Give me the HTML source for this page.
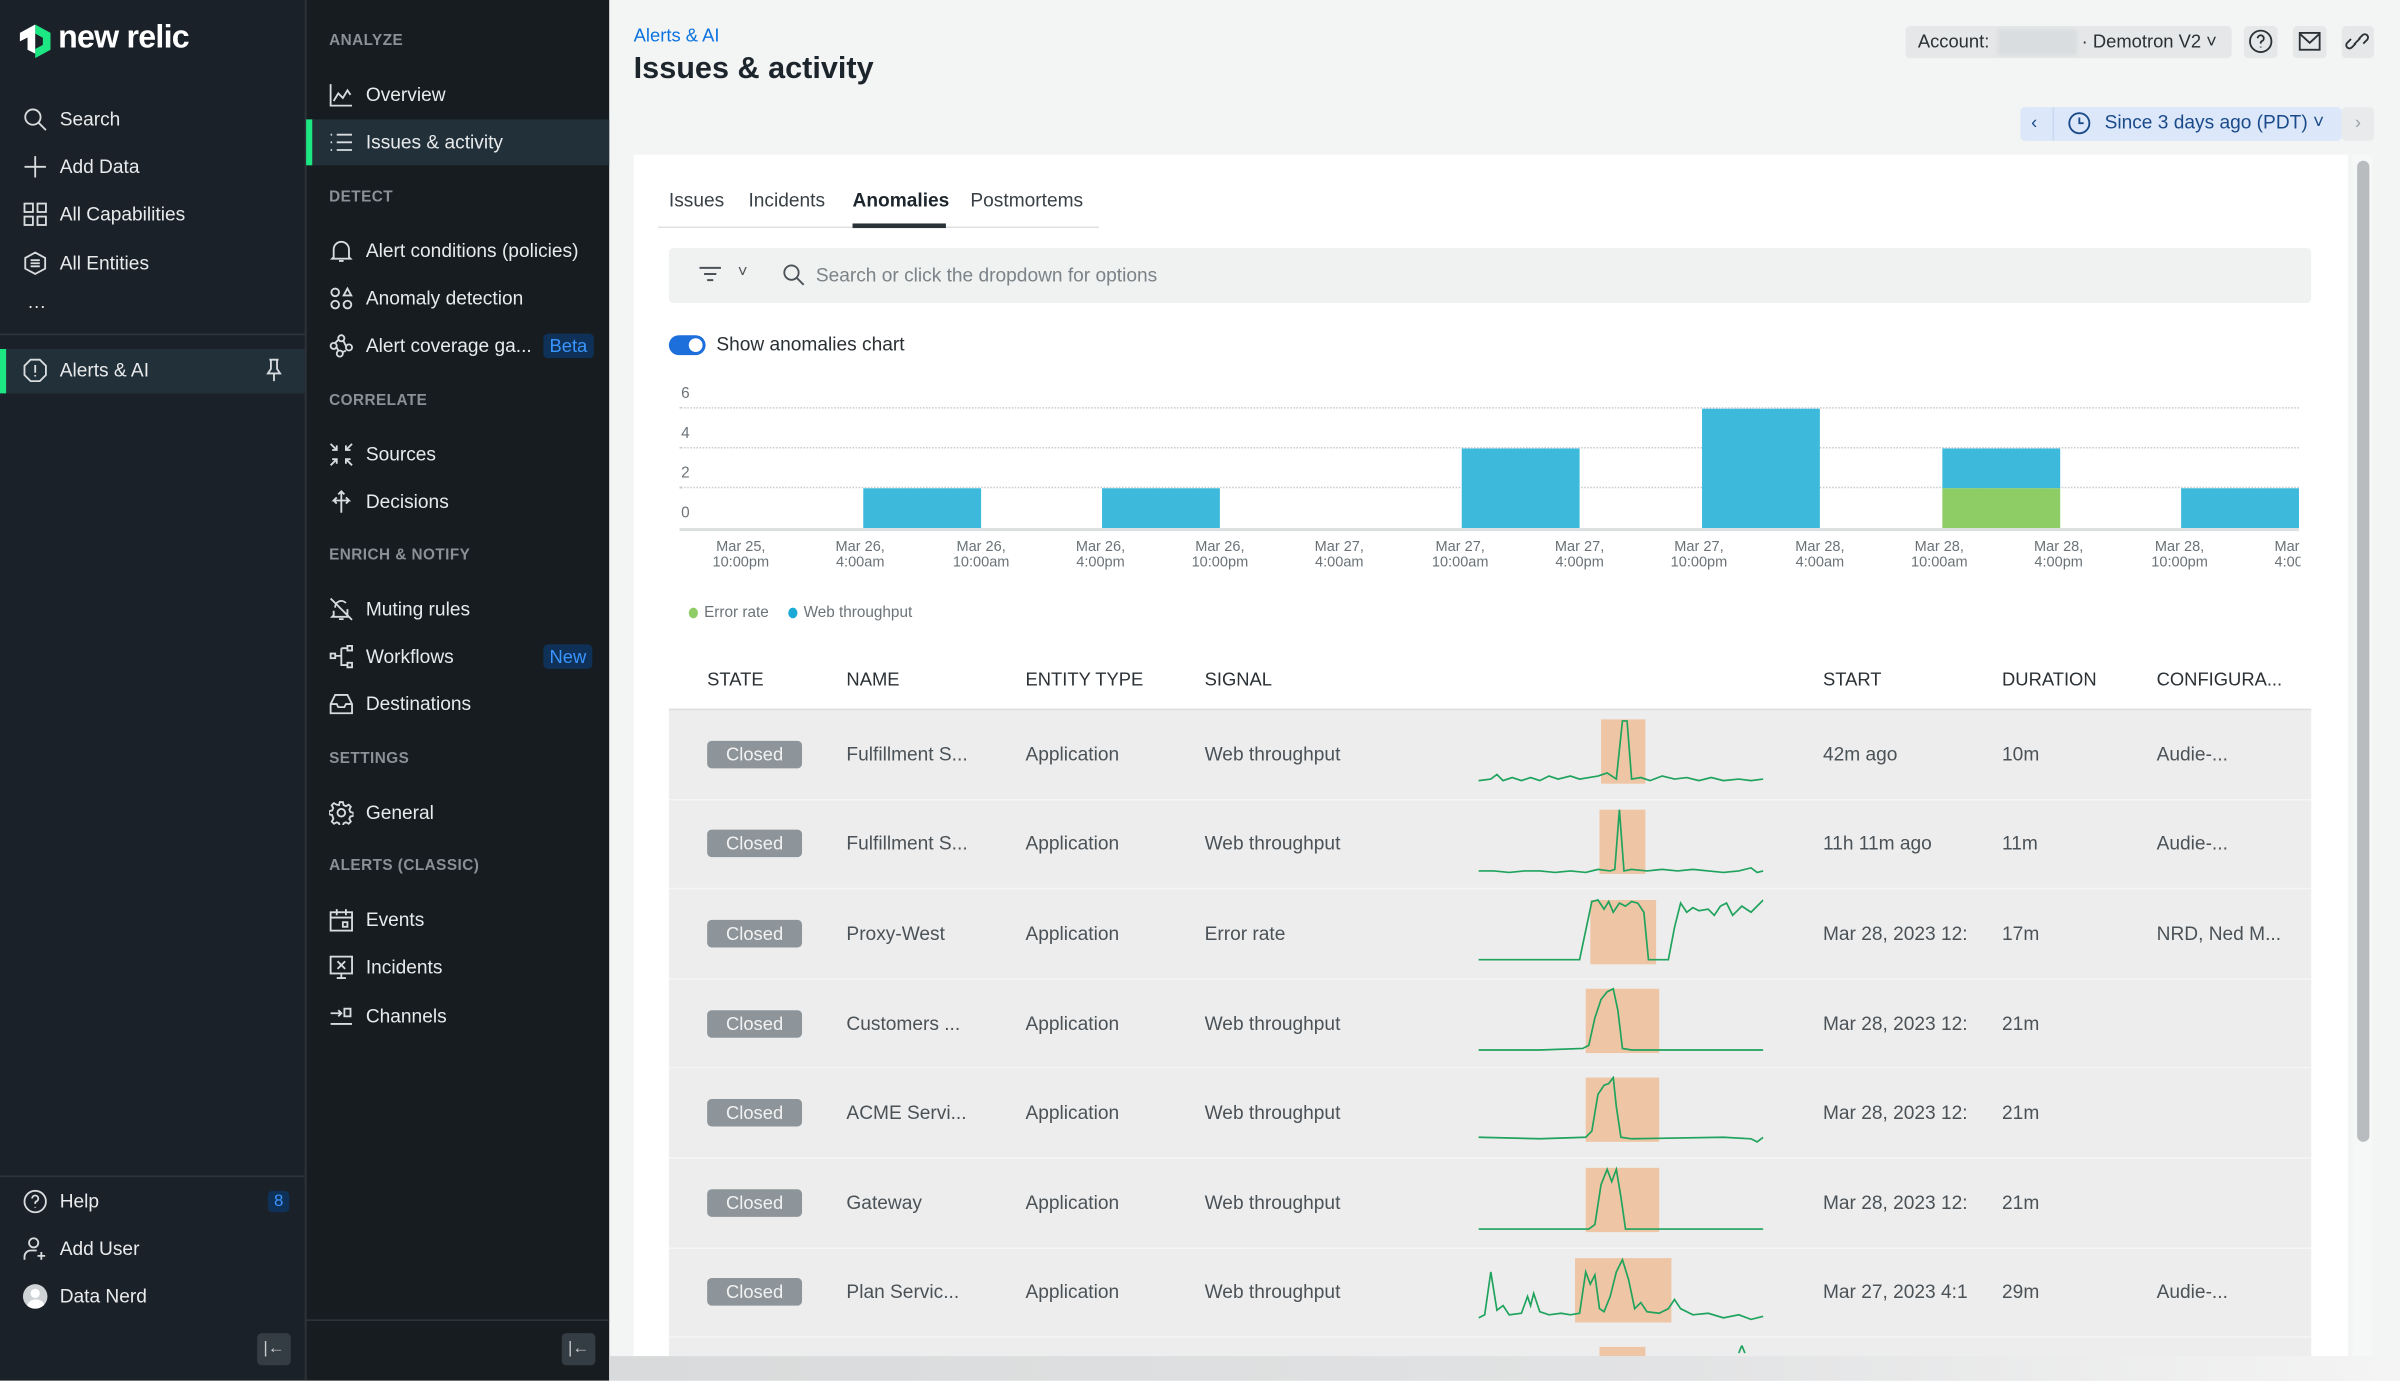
<!DOCTYPE html>
<html><head><meta charset="utf-8">
<style>
*{box-sizing:border-box;margin:0;padding:0}
html,body{width:2400px;height:1380px;overflow:hidden;background:#f3f4f4}
#w{position:absolute;left:0;top:0;width:1568px;height:902px;transform:scale(1.53061);transform-origin:0 0;font-family:"Liberation Sans",sans-serif;background:#f3f4f4}
.a{position:absolute;white-space:nowrap}
#s1{position:absolute;left:0;top:0;width:200px;height:902px;background:#1b2128;border-right:1px solid #2a3138}
#s2{position:absolute;left:200px;top:0;width:198px;height:902px;background:#161c1f}
.ni{position:absolute;font-size:12.5px;color:#e8eaeb;transform:translateY(-50%)}
.ic{position:absolute;transform:translateY(-50%)}
.hd{position:absolute;font-size:10px;color:#8a9196;letter-spacing:.3px;transform:translateY(-50%);font-weight:bold}
.bd{position:absolute;font-size:12px;color:#3a95ff;background:#0f3157;border-radius:3px;padding:1px 4px;transform:translateY(-50%)}
svg.i{width:16px;height:16px;fill:none;stroke:#d8dcde;stroke-width:1.2}
.th{position:absolute;top:444px;font-size:12px;color:#2a3034;transform:translateY(-50%)}
.row{position:absolute;left:437px;width:1073px;height:58.6px;background:#ededed;border-bottom:1.5px solid #f5f5f5}
.row .c{position:absolute;top:50%;transform:translateY(-50%);font-size:12.5px;color:#4b5257;white-space:nowrap}
.cl{position:absolute;left:25px;top:50%;transform:translateY(-50%);width:62px;height:18px;background:#8e959a;border-radius:3px;color:#f2f2f2;font-size:12px;text-align:center;line-height:18px}
.sp{position:absolute;left:529px;top:5px;width:186px;height:45px}
.tk{position:absolute;top:353px;font-size:9.5px;color:#6b7378;text-align:center;line-height:10px;transform:translateX(-50%)}
</style></head><body><div id="w">

<div id="s1">
  <svg class="a" style="left:12px;top:15px" width="22" height="24" viewBox="0 0 22 24"><path d="M11 1 L21 6.5 L21 17.5 L11 23 L11 17 L16 14.3 L16 9.7 L11 7 Z" fill="#1ce783"/><path d="M11 1 L1 6.5 L1 12 L6 9.5 L6 17.5 L11 20 L11 7 Z" fill="#fff"/></svg>
  <div class="a" style="left:38px;top:13px;font-size:21px;font-weight:bold;color:#fff;letter-spacing:-.5px">new relic</div>

  <svg class="i ic" style="left:15px;top:78px" viewBox="0 0 16 16"><circle cx="6.5" cy="6.5" r="5"/><path d="M10 10l5 5"/></svg><div class="ni" style="left:39px;top:78px">Search</div>
  <svg class="i ic" style="left:15px;top:109px" viewBox="0 0 16 16"><path d="M8 1v14M1 8h14"/></svg><div class="ni" style="left:39px;top:109px">Add Data</div>
  <svg class="i ic" style="left:15px;top:140px" viewBox="0 0 16 16"><rect x="1" y="1" width="5.5" height="5.5"/><rect x="9.5" y="1" width="5.5" height="5.5"/><rect x="1" y="9.5" width="5.5" height="5.5"/><rect x="9.5" y="9.5" width="5.5" height="5.5"/></svg><div class="ni" style="left:39px;top:140px">All Capabilities</div>
  <svg class="i ic" style="left:15px;top:172px" viewBox="0 0 16 16"><path d="M8 1l6.5 3.5v7L8 15 1.5 11.5v-7z"/><path d="M5 6h6M5 8h6M5 10h6"/></svg><div class="ni" style="left:39px;top:172px">All Entities</div>
  <div class="ni" style="left:18px;top:200px;font-size:12px">···</div>
  <div class="a" style="left:0;top:218px;width:199px;height:1px;background:#2e363d"></div>
  <div class="a" style="left:0;top:228px;width:199px;height:29px;background:#22303a"></div>
  <div class="a" style="left:0;top:228px;width:4px;height:29px;background:#1ce783"></div>
  <svg class="i ic" style="left:15px;top:242px" viewBox="0 0 16 16"><path d="M5 1h6l4 4v6l-4 4H5l-4-4V5z"/><path d="M8 4.5v5M8 11v1"/></svg><div class="ni" style="left:39px;top:242px">Alerts &amp; AI</div>
  <svg class="i ic" style="left:171px;top:242px" viewBox="0 0 16 16"><path d="M5 1h6M6 1v6l-2 3h8l-2-3V1M8 10v5"/></svg>

  <div class="a" style="left:0;top:768px;width:199px;height:1px;background:#2e363d"></div>
  <svg class="i ic" style="left:15px;top:785px" viewBox="0 0 16 16"><circle cx="8" cy="8" r="7"/><path d="M6 6a2 2 0 1 1 2.5 2c-.5.3-.5.7-.5 1.5M8 11.5v.5"/></svg><div class="ni" style="left:39px;top:785px">Help</div>
  <div class="bd" style="left:175px;top:785px;font-size:11px;padding:1px 4px">8</div>
  <svg class="i ic" style="left:15px;top:816px" viewBox="0 0 16 16"><circle cx="7" cy="4" r="3"/><path d="M1 15v-2a4 4 0 0 1 4-4h4M12 10v5M9.5 12.5h5"/></svg><div class="ni" style="left:39px;top:816px">Add User</div>
  <div class="a" style="left:15px;top:839px;width:16px;height:16px;border-radius:50%;background:#cfd3d6;overflow:hidden"><div style="position:absolute;left:5px;top:3px;width:6px;height:6px;border-radius:50%;background:#fff"></div><div style="position:absolute;left:2.5px;top:10px;width:11px;height:8px;border-radius:50%;background:#fff"></div></div><div class="ni" style="left:39px;top:847px">Data Nerd</div>
  <div class="a" style="left:168px;top:871px;width:22px;height:21px;background:#353d44;border-radius:3px;color:#c8ccce;font-size:11px;text-align:center;line-height:21px">|←</div>
</div>

<div id="s2">
  <div class="hd" style="left:15px;top:27px">ANALYZE</div>
  <svg class="i ic" style="left:15px;top:62px" viewBox="0 0 16 16"><path d="M1 1v14h14M3 12l3-5 3 3 3-5 2 3"/></svg><div class="ni" style="left:39px;top:62px">Overview</div>
  <div class="a" style="left:0;top:78px;width:198px;height:30px;background:#22303a"></div>
  <div class="a" style="left:0;top:78px;width:4px;height:30px;background:#1ce783"></div>
  <svg class="i ic" style="left:15px;top:93px" viewBox="0 0 16 16"><path d="M1 3h1M5 3h10M1 8h1M5 8h10M1 13h1M5 13h10"/></svg><div class="ni" style="left:39px;top:93px">Issues &amp; activity</div>
  <div class="hd" style="left:15px;top:129px">DETECT</div>
  <svg class="i ic" style="left:15px;top:164px" viewBox="0 0 16 16"><path d="M3 12V7a5 5 0 0 1 10 0v5l1 1H2zM6.5 14.5h3"/></svg><div class="ni" style="left:39px;top:164px">Alert conditions (policies)</div>
  <svg class="i ic" style="left:15px;top:195px" viewBox="0 0 16 16"><circle cx="4" cy="4" r="2.5"/><path d="M12 1.5l2.5 4.5h-5z"/><circle cx="4" cy="12" r="2.5"/><circle cx="12" cy="12" r="2.5"/></svg><div class="ni" style="left:39px;top:195px">Anomaly detection</div>
  <svg class="i ic" style="left:15px;top:226px" viewBox="0 0 16 16"><circle cx="8" cy="3" r="2"/><circle cx="3" cy="8" r="2"/><circle cx="13" cy="9" r="2"/><circle cx="7" cy="13" r="2"/><path d="M6 4l-2 2M11 8l-2-4M5 9l1 2M11 11l-2 1"/></svg><div class="ni" style="left:39px;top:226px">Alert coverage ga...</div>
  <div class="bd" style="left:355px;top:226px;left:155px">Beta</div>
  <div class="hd" style="left:15px;top:262px">CORRELATE</div>
  <svg class="i ic" style="left:15px;top:297px" viewBox="0 0 16 16"><path d="M1 1l4 4M5 2v3H2M15 1l-4 4M11 2v3h3M1 15l4-4M2 11h3v3M15 15l-4-4M14 11h-3v3"/></svg><div class="ni" style="left:39px;top:297px">Sources</div>
  <svg class="i ic" style="left:15px;top:328px" viewBox="0 0 16 16"><path d="M8 1v14M6 3l2-2 2 2M8 7H3l2-2M3 7l2 2M8 7h5l-2-2M13 7l-2 2"/></svg><div class="ni" style="left:39px;top:328px">Decisions</div>
  <div class="hd" style="left:15px;top:363px">ENRICH &amp; NOTIFY</div>
  <svg class="i ic" style="left:15px;top:398px" viewBox="0 0 16 16"><path d="M1 1l14 14M4 7a4 4 0 0 1 7-3M12 8v4l1 1H2l1-1V9M6.5 14.5h3"/></svg><div class="ni" style="left:39px;top:398px">Muting rules</div>
  <svg class="i ic" style="left:15px;top:429px" viewBox="0 0 16 16"><rect x="1" y="6" width="3" height="3"/><rect x="12" y="1" width="3" height="3"/><rect x="12" y="12" width="3" height="3"/><path d="M4 7.5h4M8 2.5v11h4M8 2.5h4"/></svg><div class="ni" style="left:39px;top:429px">Workflows</div>
  <div class="bd" style="left:155px;top:429px">New</div>
  <svg class="i ic" style="left:15px;top:460px" viewBox="0 0 16 16"><path d="M1 8l3-6h8l3 6v6H1zM1 8h4l1 2h4l1-2h4"/></svg><div class="ni" style="left:39px;top:460px">Destinations</div>
  <div class="hd" style="left:15px;top:496px">SETTINGS</div>
  <svg class="i ic" style="left:15px;top:531px" viewBox="0 0 16 16"><circle cx="8" cy="8" r="2.5"/><path d="M7 1h2l.5 2 1.5.7 1.8-1 1.4 1.4-1 1.8.7 1.6 2 .5v2l-2 .5-.7 1.5 1 1.8-1.4 1.4-1.8-1-1.5.7-.5 2H7l-.5-2-1.5-.7-1.8 1-1.4-1.4 1-1.8L2 9.5 0 9V7l2-.5.7-1.6-1-1.8 1.4-1.4 1.8 1L6.5 3z"/></svg><div class="ni" style="left:39px;top:531px">General</div>
  <div class="hd" style="left:15px;top:566px">ALERTS (CLASSIC)</div>
  <svg class="i ic" style="left:15px;top:601px" viewBox="0 0 16 16"><rect x="1" y="3" width="14" height="12"/><path d="M1 6.5h14M5 1v4M11 1v4"/><rect x="9" y="9.5" width="3" height="3"/></svg><div class="ni" style="left:39px;top:601px">Events</div>
  <svg class="i ic" style="left:15px;top:632px" viewBox="0 0 16 16"><rect x="1" y="1" width="14" height="11"/><path d="M5.5 4l5 5M10.5 4l-5 5M8 12v3M5 15h6"/></svg><div class="ni" style="left:39px;top:632px">Incidents</div>
  <svg class="i ic" style="left:15px;top:664px" viewBox="0 0 16 16"><path d="M1 6h7M6 4l2 2-2 2M1 13h14"/><rect x="10" y="3" width="4" height="5"/></svg><div class="ni" style="left:39px;top:664px">Channels</div>
  <div class="a" style="left:0;top:862px;width:198px;height:1px;background:#2e363d"></div>
  <div class="a" style="left:167px;top:871px;width:22px;height:21px;background:#353d44;border-radius:3px;color:#c8ccce;font-size:11px;text-align:center;line-height:21px">|←</div>
</div>

<!-- main header -->
<div class="a" style="left:414px;top:16px;font-size:12px;color:#0c74df">Alerts &amp; AI</div>
<div class="a" style="left:414px;top:34px;font-size:20px;font-weight:bold;color:#1d252c">Issues &amp; activity</div>
<div class="a" style="left:1245px;top:17px;width:213px;height:21px;background:#e5e7e8;border-radius:3px"></div>
<div class="a" style="left:1253px;top:20px;font-size:12px;color:#2a3034">Account:</div>
<div class="a" style="left:1305px;top:19px;width:52px;height:17px;background:#dadddf;border-radius:2px;filter:blur(1px)"></div>
<div class="a" style="left:1360px;top:20px;font-size:12px;color:#2a3034">· Demotron V2 ˅</div>
<div class="a" style="left:1466px;top:17px;width:22px;height:21px;background:#e5e7e8;border-radius:3px"></div>
<svg class="a" style="left:1469px;top:19px" width="16" height="16" viewBox="0 0 16 16" fill="none" stroke="#2a3034" stroke-width="1.2"><circle cx="8" cy="8" r="7"/><path d="M6 6a2 2 0 1 1 2.5 2c-.5.3-.5.7-.5 1.5M8 11.5v.5"/></svg>
<div class="a" style="left:1498px;top:17px;width:22px;height:21px;background:#e5e7e8;border-radius:3px"></div>
<svg class="a" style="left:1501px;top:19px" width="16" height="16" viewBox="0 0 16 16" fill="none" stroke="#2a3034" stroke-width="1.2"><rect x="1.5" y="2.5" width="13" height="11"/><path d="M1.5 3l6.5 6 6.5-6"/></svg>
<div class="a" style="left:1530px;top:17px;width:21px;height:21px;background:#e5e7e8;border-radius:3px"></div>
<svg class="a" style="left:1532px;top:19px" width="16" height="16" viewBox="0 0 16 16" fill="none" stroke="#2a3034" stroke-width="1.2"><path d="M7 9.5l-2.5 2.5a2 2 0 0 1-3-3L4 6.5M9 6.5L11.5 4a2 2 0 0 1 3 3L12 9.5M6 10l4-4"/></svg>

<div class="a" style="left:1320px;top:70px;width:210px;height:22px;background:#dce8fa;border-radius:3px"></div>
<div class="a" style="left:1341px;top:70px;width:1px;height:22px;background:#c8d8f0"></div>
<div class="a" style="left:1327px;top:73px;font-size:12px;color:#1a4a8a">‹</div>
<svg class="a" style="left:1351px;top:73px" width="15" height="15" viewBox="0 0 16 16" fill="none" stroke="#1a4a8a" stroke-width="1.3"><circle cx="8" cy="8" r="7"/><path d="M8 4v4h3"/></svg>
<div class="a" style="left:1375px;top:73px;font-size:12.5px;color:#1a4a8a">Since 3 days ago (PDT) ˅</div>
<div class="a" style="left:1530px;top:70px;width:21px;height:22px;background:#e8eaeb;border-radius:3px;color:#9aa0a4;font-size:12px;text-align:center;line-height:21px">›</div>

<!-- card -->
<div class="a" style="left:414px;top:101px;width:1120px;height:785px;background:#fff;overflow:hidden">
  <div style="position:absolute;left:0;top:0;width:1120px;height:785px;transform:translate(-414px,-101px)">
    <div class="a" style="left:437px;top:124px;font-size:12.5px;color:#3a4146">Issues</div>
    <div class="a" style="left:489px;top:124px;font-size:12.5px;color:#3a4146">Incidents</div>
    <div class="a" style="left:557px;top:124px;font-size:12.5px;color:#1d252c;font-weight:bold">Anomalies</div>
    <div class="a" style="left:634px;top:124px;font-size:12.5px;color:#3a4146">Postmortems</div>
    <div class="a" style="left:430px;top:148px;width:288px;height:1px;background:#dfe1e2"></div>
    <div class="a" style="left:557px;top:146px;width:61px;height:3px;background:#293338"></div>

    <div class="a" style="left:437px;top:162px;width:1073px;height:36px;background:#f0f1f1;border-radius:3px"></div>
    <svg class="a" style="left:456px;top:173px" width="16" height="14" viewBox="0 0 16 14" fill="none" stroke="#4b5257" stroke-width="1.3"><path d="M1 2h14M4 6h8M6 10h4"/></svg>
    <div class="a" style="left:482px;top:172px;font-size:11px;color:#4b5257">˅</div>
    <svg class="a" style="left:511px;top:172px" width="15" height="15" viewBox="0 0 16 16" fill="none" stroke="#4b5257" stroke-width="1.3"><circle cx="6.5" cy="6.5" r="5"/><path d="M10 10l5 5"/></svg>
    <div class="a" style="left:533px;top:173px;font-size:12.5px;color:#7b8388">Search or click the dropdown for options</div>

    <div class="a" style="left:437px;top:219px;width:24px;height:13px;background:#1d6fdc;border-radius:7px"></div>
    <div class="a" style="left:450px;top:221px;width:9px;height:9px;background:#fff;border-radius:50%"></div>
    <div class="a" style="left:468px;top:218px;font-size:12.5px;color:#2a3034">Show anomalies chart</div>

    <!-- chart -->
    <div class="a" style="left:445px;top:252px;font-size:10px;color:#6b7378">6</div>
    <div class="a" style="left:445px;top:278px;font-size:10px;color:#6b7378">4</div>
    <div class="a" style="left:445px;top:304px;font-size:10px;color:#6b7378">2</div>
    <div class="a" style="left:445px;top:330px;font-size:10px;color:#6b7378">0</div>
    <div class="a" style="left:444px;top:266px;width:1058px;border-top:1px dotted #c8cccf"></div>
    <div class="a" style="left:444px;top:292px;width:1058px;border-top:1px dotted #c8cccf"></div>
    <div class="a" style="left:444px;top:318px;width:1058px;border-top:1px dotted #c8cccf"></div>
    <div class="a" style="left:564px;top:319px;width:77px;height:26px;background:#3dbadb"></div>
    <div class="a" style="left:720px;top:319px;width:77px;height:26px;background:#3dbadb"></div>
    <div class="a" style="left:955px;top:293px;width:77px;height:52px;background:#3dbadb"></div>
    <div class="a" style="left:1112px;top:267px;width:77px;height:78px;background:#3dbadb"></div>
    <div class="a" style="left:1269px;top:293px;width:77px;height:26px;background:#3dbadb"></div>
    <div class="a" style="left:1269px;top:319px;width:77px;height:26px;background:#8ecd65"></div>
    <div class="a" style="left:1425px;top:319px;width:77px;height:26px;background:#3dbadb"></div>
    <div class="a" style="left:444px;top:345px;width:1058px;height:1.5px;background:#dcdfe0"></div>
    <div class="tk" style="left:484px">Mar 25,<br>10:00pm</div>
    <div class="tk" style="left:562px">Mar 26,<br>4:00am</div>
    <div class="tk" style="left:641px">Mar 26,<br>10:00am</div>
    <div class="tk" style="left:719px">Mar 26,<br>4:00pm</div>
    <div class="tk" style="left:797px">Mar 26,<br>10:00pm</div>
    <div class="tk" style="left:875px">Mar 27,<br>4:00am</div>
    <div class="tk" style="left:954px">Mar 27,<br>10:00am</div>
    <div class="tk" style="left:1032px">Mar 27,<br>4:00pm</div>
    <div class="tk" style="left:1110px">Mar 27,<br>10:00pm</div>
    <div class="tk" style="left:1189px">Mar 28,<br>4:00am</div>
    <div class="tk" style="left:1267px">Mar 28,<br>10:00am</div>
    <div class="tk" style="left:1345px">Mar 28,<br>4:00pm</div>
    <div class="tk" style="left:1424px">Mar 28,<br>10:00pm</div>
    <div class="a" style="left:1486px;top:353px;font-size:9.5px;color:#6b7378;line-height:10px;width:17px;overflow:hidden">Mar<br>4:00</div>
    <div class="a" style="left:450px;top:397px;width:6px;height:7px;border-radius:50%;background:#8ecd65"></div>
    <div class="a" style="left:460px;top:395px;font-size:10px;color:#6b7378">Error rate</div>
    <div class="a" style="left:515px;top:397px;width:6px;height:7px;border-radius:50%;background:#1ba9d6"></div>
    <div class="a" style="left:525px;top:395px;font-size:10px;color:#6b7378">Web throughput</div>

    <div class="th" style="left:462px">STATE</div>
    <div class="th" style="left:553px">NAME</div>
    <div class="th" style="left:670px">ENTITY TYPE</div>
    <div class="th" style="left:787px">SIGNAL</div>
    <div class="th" style="left:1191px">START</div>
    <div class="th" style="left:1308px">DURATION</div>
    <div class="th" style="left:1409px">CONFIGURA...</div>
    <div class="a" style="left:437px;top:463px;width:1073px;height:1.5px;background:#dcdfe0"></div>

    <div class="row" style="top:464px"><div class="cl">Closed</div><div class="c" style="left:116px">Fulfillment S...</div><div class="c" style="left:233px">Application</div><div class="c" style="left:350px">Web throughput</div>
      <svg class="sp" viewBox="0 0 186 45"><rect x="80" y="1" width="29" height="42" fill="#eec5a5"/><path d="M0 41 L8 40 L12 37 L16 41 L22 39 L28 41 L34 39 L40 41 L46 38 L52 40 L60 38 L66 40 L72 39 L78 38 L84 36 L90 40 L94 2 L97 2 L100 40 L106 39 L112 41 L120 38 L128 40 L136 39 L144 41 L152 39 L160 41 L170 40 L178 41 L186 40" fill="none" stroke="#1fa35d" stroke-width="1.1"/></svg>
      <div class="c" style="left:754px">42m ago</div><div class="c" style="left:871px">10m</div><div class="c" style="left:972px">Audie-...</div></div>
    <div class="row" style="top:522.6px"><div class="cl">Closed</div><div class="c" style="left:116px">Fulfillment S...</div><div class="c" style="left:233px">Application</div><div class="c" style="left:350px">Web throughput</div>
      <svg class="sp" viewBox="0 0 186 45"><rect x="79" y="1" width="30" height="42" fill="#eec5a5"/><path d="M0 41 L10 41 L20 42 L30 41 L40 41 L50 42 L60 41 L70 42 L78 40 L86 41 L89 40 L92 1 L95 41 L100 40 L110 41 L120 40 L130 41 L140 40 L150 41 L160 42 L170 41 L178 39 L182 42 L186 41" fill="none" stroke="#1fa35d" stroke-width="1.1"/></svg>
      <div class="c" style="left:754px">11h 11m ago</div><div class="c" style="left:871px">11m</div><div class="c" style="left:972px">Audie-...</div></div>
    <div class="row" style="top:581.2px"><div class="cl">Closed</div><div class="c" style="left:116px">Proxy-West</div><div class="c" style="left:233px">Application</div><div class="c" style="left:350px">Error rate</div>
      <svg class="sp" viewBox="0 0 186 45"><rect x="73" y="2" width="43" height="42" fill="#eec5a5"/><path d="M0 41 L66 41 L70 22 L74 3 L78 2 L82 8 L85 3 L88 10 L92 4 L96 6 L100 3 L104 4 L108 10 L111 41 L124 41 L128 20 L132 4 L136 10 L140 7 L144 9 L150 8 L154 12 L158 6 L162 4 L166 12 L172 6 L178 10 L186 2" fill="none" stroke="#1fa35d" stroke-width="1.1"/></svg>
      <div class="c" style="left:754px">Mar 28, 2023 12:</div><div class="c" style="left:871px">17m</div><div class="c" style="left:972px">NRD, Ned M...</div></div>
    <div class="row" style="top:639.8px"><div class="cl">Closed</div><div class="c" style="left:116px">Customers ...</div><div class="c" style="left:233px">Application</div><div class="c" style="left:350px">Web throughput</div>
      <svg class="sp" viewBox="0 0 186 45"><rect x="70" y="1" width="48" height="42" fill="#eec5a5"/><path d="M0 41 L40 41 L68 40 L72 38 L76 20 L80 8 L84 3 L88 1 L91 15 L94 40 L100 41 L140 41 L186 41" fill="none" stroke="#1fa35d" stroke-width="1.1"/></svg>
      <div class="c" style="left:754px">Mar 28, 2023 12:</div><div class="c" style="left:871px">21m</div></div>
    <div class="row" style="top:698.4px"><div class="cl">Closed</div><div class="c" style="left:116px">ACME Servi...</div><div class="c" style="left:233px">Application</div><div class="c" style="left:350px">Web throughput</div>
      <svg class="sp" viewBox="0 0 186 45"><rect x="70" y="1" width="48" height="42" fill="#eec5a5"/><path d="M0 40 L40 41 L70 40 L74 36 L78 12 L82 6 L85 5 L88 1 L90 20 L93 40 L100 41 L160 40 L178 41 L182 43 L186 40" fill="none" stroke="#1fa35d" stroke-width="1.1"/></svg>
      <div class="c" style="left:754px">Mar 28, 2023 12:</div><div class="c" style="left:871px">21m</div></div>
    <div class="row" style="top:757px"><div class="cl">Closed</div><div class="c" style="left:116px">Gateway</div><div class="c" style="left:233px">Application</div><div class="c" style="left:350px">Web throughput</div>
      <svg class="sp" viewBox="0 0 186 45"><rect x="70" y="1" width="48" height="42" fill="#eec5a5"/><path d="M0 41 L40 41 L72 41 L76 38 L80 12 L84 2 L87 10 L90 2 L93 20 L96 41 L140 41 L186 41" fill="none" stroke="#1fa35d" stroke-width="1.1"/></svg>
      <div class="c" style="left:754px">Mar 28, 2023 12:</div><div class="c" style="left:871px">21m</div></div>
    <div class="row" style="top:815.6px"><div class="cl">Closed</div><div class="c" style="left:116px">Plan Servic...</div><div class="c" style="left:233px">Application</div><div class="c" style="left:350px">Web throughput</div>
      <svg class="sp" viewBox="0 0 186 45"><rect x="63" y="1" width="63" height="42" fill="#eec5a5"/><path d="M0 40 L4 38 L8 10 L12 35 L16 32 L20 38 L28 37 L32 26 L34 32 L36 24 L40 36 L46 38 L54 37 L60 38 L66 37 L70 10 L73 18 L76 12 L79 34 L82 36 L86 26 L90 10 L94 2 L98 15 L102 34 L106 30 L110 36 L118 37 L124 34 L128 28 L132 34 L140 38 L150 37 L160 40 L170 38 L178 41 L186 39" fill="none" stroke="#1fa35d" stroke-width="1.1"/></svg>
      <div class="c" style="left:754px">Mar 27, 2023 4:1</div><div class="c" style="left:871px">29m</div><div class="c" style="left:972px">Audie-...</div></div>
    <div class="row" style="top:874.2px">
      <svg class="sp" viewBox="0 0 186 45"><rect x="79" y="1" width="30" height="42" fill="#eec5a5"/><path d="M170 5 L172 0 L174 5" fill="none" stroke="#1fa35d" stroke-width="1.1"/></svg></div>
  </div>
</div>
<div class="a" style="left:1537px;top:101px;width:13px;height:785px;background:#f6f7f7"></div>
<div class="a" style="left:1540px;top:105px;width:8px;height:641px;background:#b8bcbf;border-radius:4px"></div>
<div class="a" style="left:398px;top:886px;width:1170px;height:16px;background:linear-gradient(90deg,#d8dadb,#e2e3e4 60%,#f4f4f4)"></div>
</div></body></html>
